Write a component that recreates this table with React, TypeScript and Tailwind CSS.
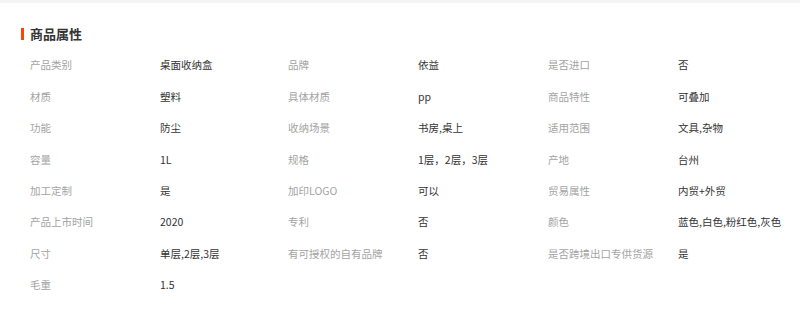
/**
 * 商品属性 — product attribute table (three label/value pairs per row).
 */

interface Attr {
  label: string;
  value: string;
}

const ATTRS: Attr[] = [
  { label: "产品类别", value: "桌面收纳盒" },
  { label: "品牌", value: "依益" },
  { label: "是否进口", value: "否" },
  { label: "材质", value: "塑料" },
  { label: "具体材质", value: "pp" },
  { label: "商品特性", value: "可叠加" },
  { label: "功能", value: "防尘" },
  { label: "收纳场景", value: "书房,桌上" },
  { label: "适用范围", value: "文具,杂物" },
  { label: "容量", value: "1L" },
  { label: "规格", value: "1层，2层，3层" },
  { label: "产地", value: "台州" },
  { label: "加工定制", value: "是" },
  { label: "加印LOGO", value: "可以" },
  { label: "贸易属性", value: "内贸+外贸" },
  { label: "产品上市时间", value: "2020" },
  { label: "专利", value: "否" },
  { label: "颜色", value: "蓝色,白色,粉红色,灰色" },
  { label: "尺寸", value: "单层,2层,3层" },
  { label: "有可授权的自有品牌", value: "否" },
  { label: "是否跨境出口专供货源", value: "是" },
  { label: "毛重", value: "1.5" },
];

export default function App() {
  return (
    <div
      className="w-[800px] h-[309px] bg-white overflow-hidden"
      style={{ fontFamily: '"Noto Sans CJK SC", "Microsoft YaHei", sans-serif' }}
    >
      {/* top divider band */}
      <div className="h-[3px] bg-[#f4f4f4]" />

      {/* heading */}
      <div className="flex items-center mt-[24px] pl-[21px] h-[13px]">
        <span className="w-[3px] h-[12px] bg-[#ff4400]" />
        <span className="ml-[6px] text-[13px] font-bold leading-none text-[#333]">
          商品属性
        </span>
      </div>

      {/* attribute grid */}
      <div className="mt-[10px] pl-[30px] grid grid-cols-[130px_128px_130px_130px_130px_1fr] auto-rows-[31.4px] items-center text-[10.5px] leading-none">
        {ATTRS.map((a) => (
          <div key={a.label} className="contents">
            <span className="text-[#a3a3a3] whitespace-nowrap">{a.label}</span>
            <span className="text-[#333] whitespace-nowrap">{a.value}</span>
          </div>
        ))}
      </div>
    </div>
  );
}
